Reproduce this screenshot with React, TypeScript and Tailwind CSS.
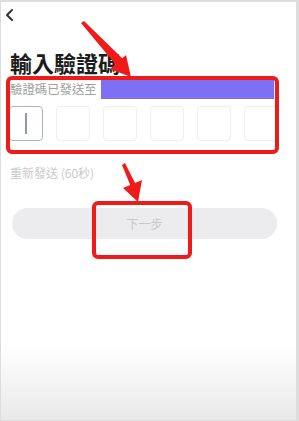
import React from 'react';

const font = { fontFamily: '"Noto Sans CJK TC", "Noto Sans", sans-serif' };

function CodeBox({ active }: { active?: boolean }) {
  return (
    <div
      className={`w-[34px] h-[35px] shrink-0 rounded-[4px] flex items-center justify-center ${
        active ? 'border-[1.5px] border-[#a9b2c9]' : 'border border-[#eeeeef]'
      }`}
    >
      {active && <div className="w-[1.5px] h-[21px] bg-[#8f98b3]" />}
    </div>
  );
}

function Annotations() {
  return (
    <svg className="absolute inset-0 pointer-events-none" width="299" height="421" viewBox="0 0 299 421">
      <rect x="7" y="76" width="269" height="74" rx="4" fill="none" stroke="#ef1b1b" strokeWidth="4" />
      <rect x="93" y="201" width="96" height="54" rx="4" fill="none" stroke="#ef1b1b" strokeWidth="4" />
      <polygon points="80,21 83,19 122,57 115,63" fill="#ef1b1b" />
      <polygon points="109,67 125,53 130,75" fill="#ef1b1b" />
      <polygon points="121,163 124,161 135,183 130,185" fill="#ef1b1b" />
      <polygon points="122,186 141,178 137,200" fill="#ef1b1b" />
    </svg>
  );
}

export default function App() {
  return (
    <div
      className="relative w-[299px] h-[421px] overflow-hidden border-t-2 border-r-[3px] border-l border-b border-[#dddddd] bg-[linear-gradient(to_bottom,#ffffff_82%,#e9e9e9)]"
      style={font}
    >
      <div className="pt-[6px] pl-[4px] h-[20px]">
        <svg className="block" width="10" height="14" viewBox="0 0 10 14">
          <path d="M7 2 L2 7 L7 12" fill="none" stroke="#333" strokeWidth="2" strokeLinecap="round" strokeLinejoin="round" />
        </svg>
      </div>

      <h1 className="mt-[27px] pl-[9px] text-[22px] leading-[26px] font-bold text-[#1c1c1c]">輸入驗證碼</h1>

      <div className="mt-[5px] flex items-center h-[19px]">
        <span className="pl-[9px] w-[100px] text-[12.4px] leading-[19px] text-[#a0a0a0]">驗證碼已發送至</span>
        <div className="w-[173px] h-[19px] bg-[#7e70f4]" />
      </div>

      <div className="mt-[7px] pl-[8px] flex gap-[13px]">
        <CodeBox active />
        <CodeBox />
        <CodeBox />
        <CodeBox />
        <CodeBox />
        <CodeBox />
      </div>

      <p className="mt-[24px] pl-[9px] text-[12px] leading-[16px] text-[#c9c9c9]">重新發送 (60秒)</p>

      <div className="mt-[27px] mx-[11px] w-[265px] h-[31px] rounded-full bg-[#ececef] flex items-center justify-center">
        <span className="text-[12px] text-[#c6c6c9]">下一步</span>
      </div>

      <Annotations />
    </div>
  );
}
